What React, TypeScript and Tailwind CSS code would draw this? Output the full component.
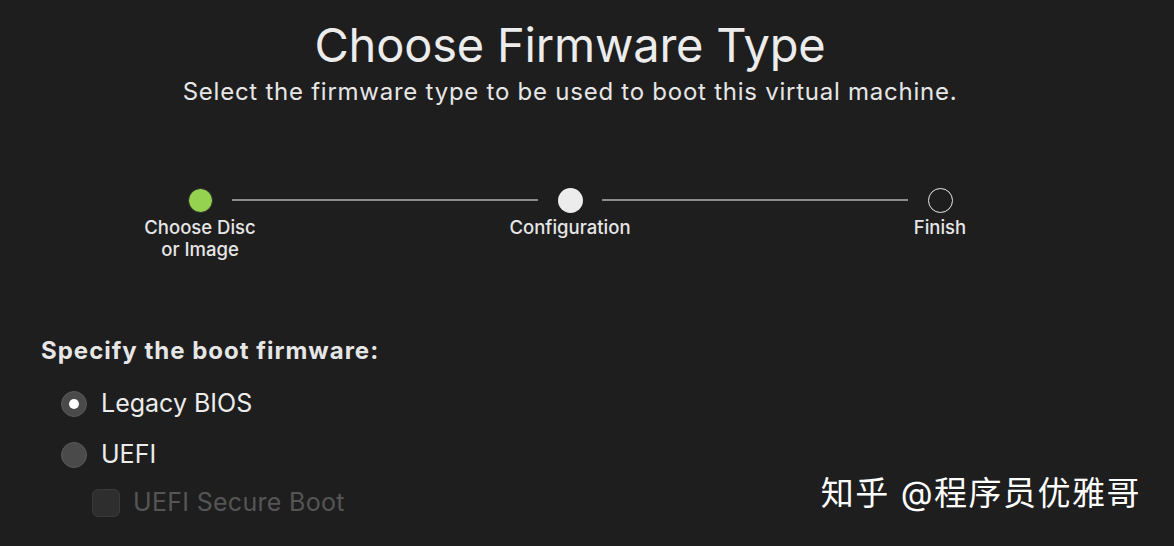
import React from 'react';

interface Step {
  label: string[];
  state: 'done' | 'current' | 'todo';
}

const steps: Step[] = [
  { label: ['Choose Disc', 'or Image'], state: 'done' },
  { label: ['Configuration'], state: 'current' },
  { label: ['Finish'], state: 'todo' },
];

const StepDot: React.FC<{ state: Step['state'] }> = ({ state }) => {
  if (state === 'done') return <div className="w-[25px] h-[25px] rounded-full bg-[#94d250] border border-[#2a2a2a]" />;
  if (state === 'current') return <div className="w-[25px] h-[25px] rounded-full bg-[#ececec]" />;
  return <div className="w-[25px] h-[25px] rounded-full border-[1.5px] border-[#e8e8e8]" />;
};

const Stepper: React.FC = () => (
  <div className="relative w-[880px] ml-[130px] mt-[81px] h-[80px]">
    {/* connector lines */}
    <div className="absolute left-[102px] top-[11px] w-[306px] h-[2px] bg-[#8c8c8c]" />
    <div className="absolute left-[472px] top-[11px] w-[306px] h-[2px] bg-[#8c8c8c]" />
    <div className="flex justify-between">
      {steps.map((s) => (
        <div key={s.label[0]} className="w-[140px] flex flex-col items-center">
          <StepDot state={s.state} />
          <div className="mt-[3px] text-[18.5px] leading-[22px] text-[#e6e6e6] text-center font-medium">
            {s.label.map((l) => (
              <div key={l}>{l}</div>
            ))}
          </div>
        </div>
      ))}
    </div>
  </div>
);

const Radio: React.FC<{ checked?: boolean; label: string }> = ({ checked, label }) => (
  <div className="flex items-center gap-[14px] h-[30px]">
    <div className="w-[26px] h-[26px] rounded-full bg-[#4a4a4a] border border-[#5a5a5a] flex items-center justify-center">
      {checked && <div className="w-[10px] h-[10px] rounded-full bg-white" />}
    </div>
    <span className="text-[25px] text-[#ececec]">{label}</span>
  </div>
);

export default function App() {
  return (
    <div
      className="w-[1174px] h-[546px] bg-[#1e1e1e] overflow-hidden relative"
      style={{ fontFamily: 'Inter, "Noto Sans CJK SC", sans-serif' }}
    >
      <div className="w-[1140px] text-center pt-[17px]">
        <h1 className="text-[47px] leading-[56px] text-[#ececec] tracking-[-0.2px]">Choose Firmware Type</h1>
        <p className="text-[24px] leading-[30px] text-[#e6e6e6] mt-[4px] tracking-[0.75px]">
          Select the firmware type to be used to boot this virtual machine.
        </p>
      </div>

      <Stepper />

      <div className="pl-[41px] mt-[69px]">
        <div className="text-[24px] font-bold text-[#e6e6e6] leading-[28px] tracking-[1px]">Specify the boot firmware:</div>
        <div className="pl-[20px] mt-[24px] flex flex-col gap-[21px]">
          <Radio checked label="Legacy BIOS" />
          <Radio label="UEFI" />
        </div>
        <div className="pl-[51px] mt-[14px] flex items-center gap-[13px]">
          <div className="w-[28px] h-[28px] rounded-[6px] bg-[#2e2e2e] border border-[#3a3a3a]" />
          <span className="text-[25px] text-[#555555] tracking-[0.3px]">UEFI Secure Boot</span>
        </div>
      </div>

      <div className="absolute right-[33px] bottom-[28px] text-[33px] text-white tracking-[1.5px]">
        知乎 @程序员优雅哥
      </div>
    </div>
  );
}
